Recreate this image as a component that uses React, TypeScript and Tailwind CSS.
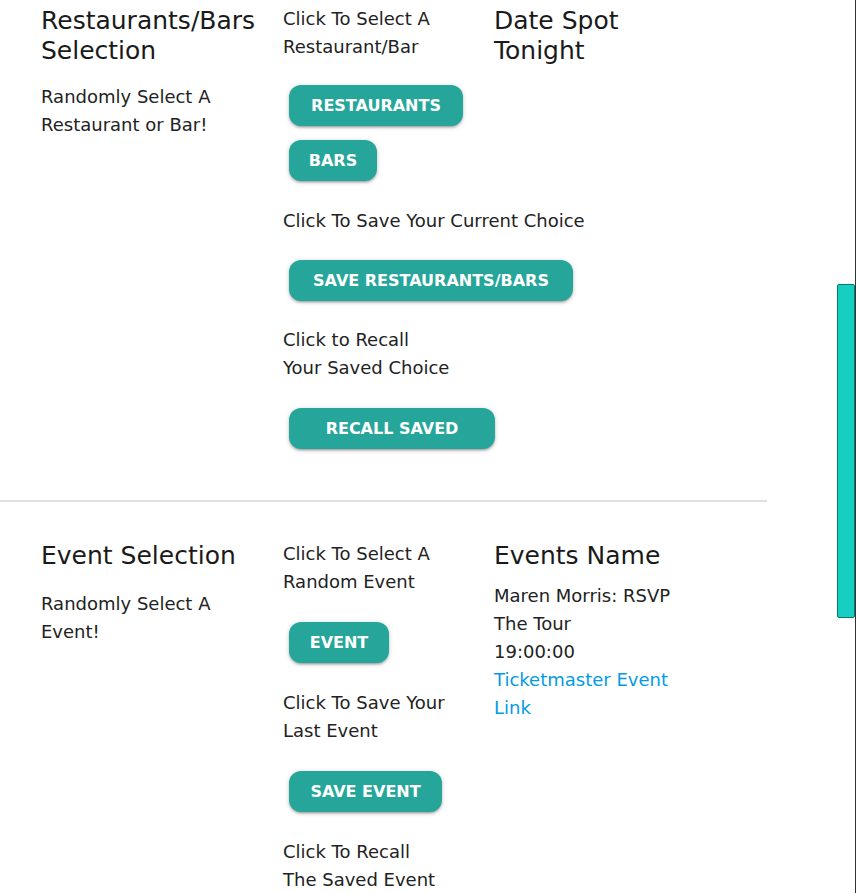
import React from "react";

const font = { fontFamily: '"DejaVu Sans", Verdana, sans-serif' };

const Btn = ({ label, w }: { label: string; w: string }) => (
  <button
    className={`${w} ml-[6px] h-[41px] rounded-xl bg-[#26a69a] text-white text-[16px] font-bold uppercase shadow-[0_2px_2px_0_rgba(0,0,0,0.14),0_3px_1px_-2px_rgba(0,0,0,0.12),0_1px_5px_0_rgba(0,0,0,0.2)] flex items-center justify-center whitespace-nowrap`}
  >
    {label}
  </button>
);

const Heading = ({ children }: { children: React.ReactNode }) => (
  <h5 className="text-[25px] leading-[30px] text-[#1a1a1a] whitespace-nowrap">{children}</h5>
);

const Text = ({ children, className = "" }: { children: React.ReactNode; className?: string }) => (
  <p className={`text-[18px] leading-[28px] text-[#222] whitespace-nowrap ${className}`}>{children}</p>
);

const App = () => {
  return (
    <div style={font} className="relative h-[893px] w-[856px] overflow-hidden bg-white">
      {/* restaurants / bars */}
      <section className="grid grid-cols-[242px_211px_1fr] pl-[41px] pt-[5px]">
        <div className="pt-[1px]">
          <Heading>
            Restaurants/Bars
            <br />
            Selection
          </Heading>
          <Text className="mt-[17px]">
            Randomly Select A
            <br />
            Restaurant or Bar!
          </Text>
        </div>
        <div className="flex flex-col items-start">
          <Text>
            Click To Select A
            <br />
            Restaurant/Bar
          </Text>
          <div className="mt-[24px]">
            <Btn label="Restaurants" w="w-[174px]" />
          </div>
          <div className="mt-[14px]">
            <Btn label="Bars" w="w-[88px]" />
          </div>
          <Text className="mt-[26px]">Click To Save Your Current Choice</Text>
          <div className="mt-[25px]">
            <Btn label="Save Restaurants/Bars" w="w-[284px]" />
          </div>
          <Text className="mt-[25px]">
            Click to Recall
            <br />
            Your Saved Choice
          </Text>
          <div className="mt-[26px]">
            <Btn label="Recall Saved" w="w-[206px]" />
          </div>
        </div>
        <div className="pt-[1px]">
          <Heading>
            Date Spot
            <br />
            Tonight
          </Heading>
        </div>
      </section>

      <hr className="mt-[51px] w-[767px] border-0 border-t-2 border-[#e0e0e0]" />

      {/* events */}
      <section className="grid grid-cols-[242px_211px_1fr] pl-[41px] pt-[38px]">
        <div className="pt-[1px]">
          <Heading>Event Selection</Heading>
          <Text className="mt-[19px]">
            Randomly Select A
            <br />
            Event!
          </Text>
        </div>
        <div className="flex flex-col items-start">
          <Text>
            Click To Select A
            <br />
            Random Event
          </Text>
          <div className="mt-[26px]">
            <Btn label="Event" w="w-[100px]" />
          </div>
          <Text className="mt-[26px]">
            Click To Save Your
            <br />
            Last Event
          </Text>
          <div className="mt-[26px]">
            <Btn label="Save Event" w="w-[153px]" />
          </div>
          <Text className="mt-[26px]">
            Click To Recall
            <br />
            The Saved Event
          </Text>
        </div>
        <div className="pt-[1px]">
          <Heading>Events Name</Heading>
          <Text className="mt-[11px]">
            Maren Morris: RSVP
            <br />
            The Tour
            <br />
            19:00:00
          </Text>
          <a href="#" className="block text-[18px] leading-[28px] text-[#039be5] whitespace-nowrap">
            Ticketmaster Event
            <br />
            Link
          </a>
        </div>
      </section>

      {/* scrollbar */}
      <div className="absolute right-0 top-0 h-full w-px bg-[#333]" />
      <div className="absolute right-px top-[284px] h-[334px] w-[18px] rounded-[2px] border border-[#08786e] bg-[#17cfc0]" />
    </div>
  );
};

export default App;
